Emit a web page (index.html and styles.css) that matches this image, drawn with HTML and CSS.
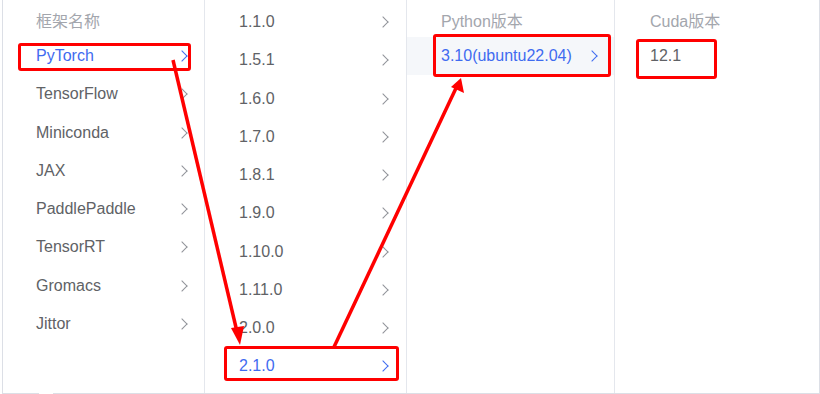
FILE: index.html
```html
<!DOCTYPE html>
<html lang="zh">
<head>
<meta charset="utf-8">
<link rel="stylesheet" href="styles.css">
</head>
<body>
<div class="panel">
  <div class="col col1">
    <div class="head">框架名称</div>
    <div class="item active"><span>PyTorch</span><i class="chev"></i></div>
    <div class="item"><span>TensorFlow</span><i class="chev"></i></div>
    <div class="item"><span>Miniconda</span><i class="chev"></i></div>
    <div class="item"><span>JAX</span><i class="chev"></i></div>
    <div class="item"><span>PaddlePaddle</span><i class="chev"></i></div>
    <div class="item"><span>TensorRT</span><i class="chev"></i></div>
    <div class="item"><span>Gromacs</span><i class="chev"></i></div>
    <div class="item"><span>Jittor</span><i class="chev"></i></div>
  </div>
  <div class="col col2">
    <div class="item"><span>1.1.0</span><i class="chev"></i></div>
    <div class="item"><span>1.5.1</span><i class="chev"></i></div>
    <div class="item"><span>1.6.0</span><i class="chev"></i></div>
    <div class="item"><span>1.7.0</span><i class="chev"></i></div>
    <div class="item"><span>1.8.1</span><i class="chev"></i></div>
    <div class="item"><span>1.9.0</span><i class="chev"></i></div>
    <div class="item"><span>1.10.0</span><i class="chev"></i></div>
    <div class="item"><span>1.11.0</span><i class="chev"></i></div>
    <div class="item"><span>2.0.0</span><i class="chev"></i></div>
    <div class="item active"><span>2.1.0</span><i class="chev"></i></div>
  </div>
  <div class="col col3">
    <div class="head head-tall">Python版本</div>
    <div class="item active hl"><span>3.10(ubuntu22.04)</span><i class="chev"></i></div>
  </div>
  <div class="col col4">
    <div class="head head-tall">Cuda版本</div>
    <div class="item"><span>12.1</span></div>
  </div>
  <div class="notch"></div>
  <svg class="marks" width="820" height="394" viewBox="0 0 820 394">
    <g fill="none" stroke="#ff0000" stroke-width="3">
      <rect x="19.5" y="44.5" width="170" height="25" rx="1.5"/>
      <rect x="434.5" y="35.5" width="175" height="40" rx="1.5"/>
      <rect x="637.5" y="40.5" width="78" height="37" rx="1.5"/>
      <rect x="225.5" y="347.5" width="172" height="32" rx="1.5"/>
      <line x1="173" y1="60" x2="238" y2="336" stroke-width="3.5"/>
      <line x1="334" y1="347" x2="457" y2="86" stroke-width="3.5"/>
    </g>
    <g fill="#ff0000">
      <polygon points="240,345 231,328 244,326"/>
      <polygon points="461,78 464,93 451,87"/>
    </g>
  </svg>
</div>
</body>
</html>
```
FILE: styles.css
```css
html, body {
  margin: 0;
  padding: 0;
  background: #ffffff;
}
body {
  width: 820px;
  height: 394px;
  overflow: hidden;
  font-family: "Liberation Sans", "Noto Sans CJK SC", Arial, sans-serif;
  font-size: 16px;
  color: #606266;
}
.panel {
  position: relative;
  display: flex;
  margin-left: 2px;
  margin-top: -1px;
  width: 816px;
  height: 393px;
  border: 1px solid #dcdfe6;
  background: #fff;
}
.col {
  box-sizing: border-box;
  border-right: 1px solid #e4e7ed;
  padding-top: 3px;
}
.col1 { width: 202px; }
.col2 { width: 202px; }
.col3 { width: 208px; }
.col4 { width: 204px; border-right: none; }
.head {
  box-sizing: border-box;
  height: 34px;
  line-height: 37px;
  padding-left: 33px;
  color: #a3a6ad;
}
.head-tall { height: 34px; }
.col3 .head { padding-left: 34px; }
.col4 .head { padding-left: 35px; }
.item {
  display: flex;
  align-items: center;
  justify-content: space-between;
  height: 38.25px;
  padding: 0 15px 0 33px;
}
.col2 .item { padding-left: 34px; padding-right: 16px; }
.col3 .item { padding-left: 34px; padding-right: 15px; }
.col4 .item { padding-left: 35px; }
.item.active { color: #3f6bf0; }
.item.hl { background: #f5f7fa; }
.chev {
  display: block;
  width: 7px;
  height: 7px;
  border-top: 1px solid #909399;
  border-right: 1px solid #909399;
  transform: rotate(45deg);
  margin-right: 3px;
}
.item.active .chev { border-color: #3f6bf0; }
.notch {
  position: absolute;
  left: 36px;
  bottom: -2px;
  width: 14px;
  height: 3px;
  background: #fff;
}
.marks {
  position: absolute;
  left: -3px;
  top: 0;
  pointer-events: none;
}
```
